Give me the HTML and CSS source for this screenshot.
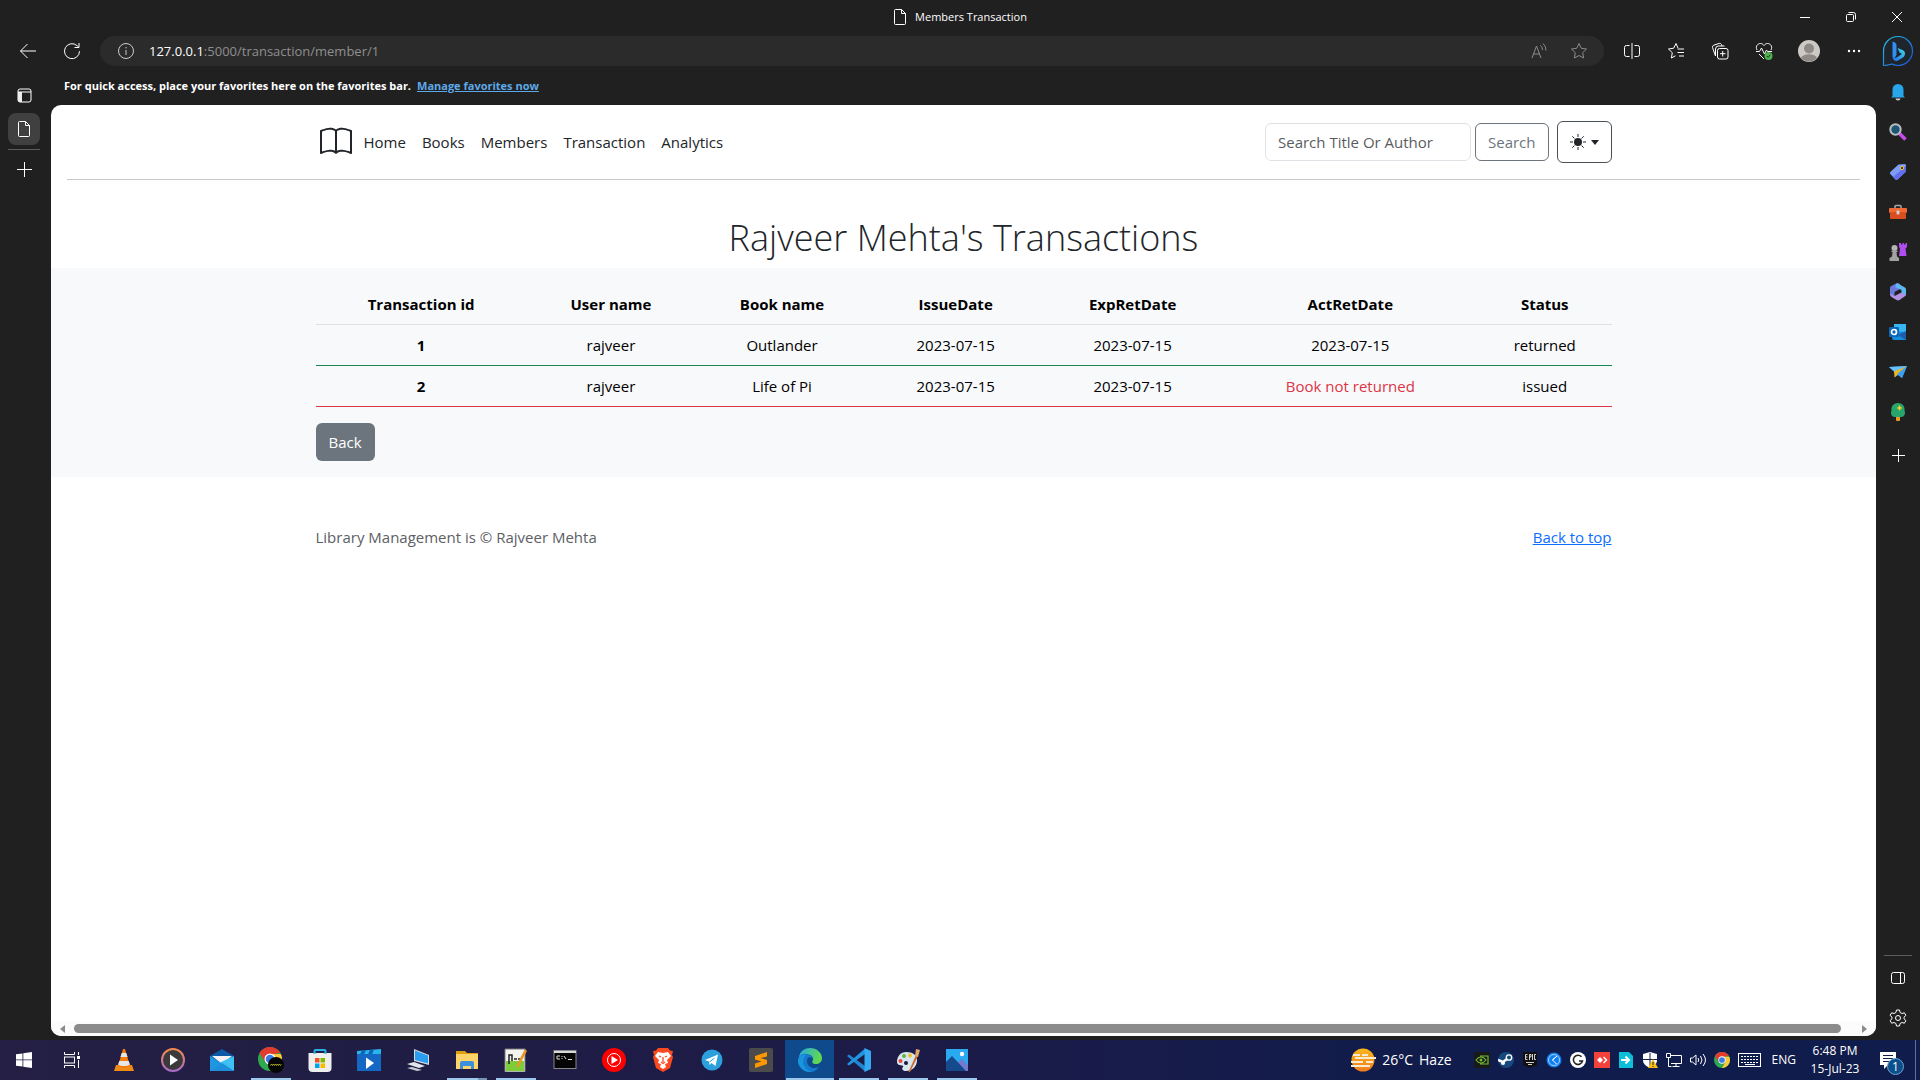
FILE: index.html
```html
<!DOCTYPE html>
<html lang="en">
<head>
<meta charset="utf-8">
<meta name="viewport" content="width=device-width, initial-scale=1">
<title>Members Transaction</title>
<link rel="stylesheet" href="styles.css">
</head>
<body>
<div class="desktop">
  <div class="browser">
    <div class="chrome">
      <div class="titlebar">
        <div class="tab-title">
          <svg class="line" width="14" height="18" viewBox="0 0 14 18"><path d="M2.500 1.500h6l4 4v10a1 1 0 0 1-1 1h-9a1 1 0 0 1-1-1v-13a1 1 0 0 1 1-1zM8.500 1.500v4h4"/></svg>
          <span>Members Transaction</span>
        </div>
        <div class="window-buttons">
          <button aria-label="Minimize"><svg class="line" width="12" height="12" viewBox="0 0 12 12"><path d="M1 6.500h10"/></svg></button>
          <button aria-label="Restore"><svg class="line" width="12" height="12" viewBox="0 0 12 12"><rect x="1.500" y="3.500" width="7" height="7" rx="1"/><path d="M3.500 1.500h5a2 2 0 0 1 2 2v5"/></svg></button>
          <button aria-label="Close"><svg class="line" width="12" height="12" viewBox="0 0 12 12"><path d="M1 1l10 10M11 1L1 11"/></svg></button>
        </div>
      </div>
      <div class="toolbar">
        <div class="nav-buttons">
          <button aria-label="Back"><svg class="line" width="18" height="18" viewBox="0 0 18 18"><path d="M17 9H1.500M8.500 2L1.500 9l7 7"/></svg></button>
          <button aria-label="Refresh"><svg class="line" width="18" height="18" viewBox="0 0 18 18"><path d="M16.500 9.200A7.500 7.500 0 1 1 14 3.600l1.500 1.400M16 1v4.500h-4.500"/></svg></button>
        </div>
        <div class="address">
          <svg class="line soft" width="18" height="18" viewBox="0 0 18 18"><circle cx="9" cy="9" r="7.500"/><path d="M9 8v5M9 5v1.400"/></svg>
          <div class="url" role="textbox" aria-label="Address"><b>127.0.0.1</b>:5000/transaction/member/1</div>
          <button aria-label="Read aloud"><svg class="line dim" width="18" height="18" viewBox="0 0 18 18"><path d="M2 16L6.500 4 11 16M3.500 12h6M10.500 3.500a6 6 0 0 1 2 4.500M13 1.500a9 9 0 0 1 3 7"/></svg></button>
          <button aria-label="Add to favorites"><svg class="line dim" width="18" height="18" viewBox="0 0 18 18"><path d="M9 1.500l2.300 4.800 5.200.7-3.800 3.700.9 5.300L9 13.500 4.400 16l.9-5.300L1.500 7l5.200-.7z"/></svg></button>
        </div>
        <div class="tool-buttons">
          <button aria-label="Split screen"><svg class="line" width="18" height="18" viewBox="0 0 18 18"><path d="M6.500 3.500h-3a2 2 0 0 0-2 2v7a2 2 0 0 0 2 2h3M11.500 3.500h3a2 2 0 0 1 2 2v7a2 2 0 0 1-2 2h-3M9 1v16"/></svg></button>
          <button aria-label="Favorites"><svg class="line" width="18" height="18" viewBox="0 0 18 18"><path d="M11 6L9 1.500 6.700 6.200 1.500 7l3.800 3.700-.9 5.300 4-2.200M10.500 7H17M10.500 10.500H17M12 14h5"/></svg></button>
          <button aria-label="Collections"><svg class="line" width="18" height="18" viewBox="0 0 18 18"><rect x="6.500" y="6.500" width="10.500" height="10.500" rx="2"/><path d="M11.700 9v5.500M9 11.700h5.500M4.500 14L1.500 5.500a2 2 0 0 1 1.300-2.300L8 1.500c1-.3 2 0 2.500 1l.5 1.500M4.500 14V7a3 3 0 0 1 3-3h6"/></svg></button>
          <button aria-label="Browser essentials"><svg width="18" height="18" viewBox="0 0 18 18"><path class="line" d="M2 8C0 4 3 1.500 5.500 1.500 7 1.500 8 2.200 9 3.500c1-1.300 2-2 3.500-2C15 1.500 18 4 16 8M1 9.500h3.500L6.500 6l3 6 2-4 1 1.500H17M4 12l5 5"/><circle cx="13.500" cy="14" r="4" fill="#4caf50"/><path d="M11.800 14l1.300 1.300 2.300-2.600" fill="none" stroke="#173d18"/></svg></button>
          <button class="wide" aria-label="Profile"><svg width="22" height="22" viewBox="0 0 22 22"><circle cx="11" cy="11" r="11" fill="#cdc9c4"/><circle cx="11" cy="8.500" r="5" fill="#8f8a86"/><path d="M3 18c2-5 14-5 16 0a11 11 0 0 1-16 0z" fill="#8f8a86"/></svg></button>
          <button class="wide" aria-label="Settings and more"><svg width="14" height="4" viewBox="0 0 14 4" fill="#fff"><circle cx="2" cy="2" r="1.200"/><circle cx="7" cy="2" r="1.200"/><circle cx="12" cy="2" r="1.200"/></svg></button>
          <button aria-label="Bing chat"><svg width="32" height="32" viewBox="0 0 32 32"><defs><linearGradient id="bing" x1="0" y1="0" x2="1" y2="1"><stop offset="0" stop-color="#25c4e8"/><stop offset="1" stop-color="#1c4fd6"/></linearGradient><linearGradient id="swoosh" x1="1" y1="0" x2="0" y2="1"><stop offset="0" stop-color="#3ee0e8"/><stop offset="1" stop-color="#2368e8"/></linearGradient></defs><path d="M1.500 30.500V16A14.500 14.500 0 1 1 16 30.500c-2 0-4-.5-6-1.500-2.500.8-5 1.500-8.500 1.500z" fill="#1e252c" stroke="url(#bing)" stroke-width="1.200"/><path d="M10.500 6.500c2 .3 4 1.500 4 4V20l-2 3c-1.500-.5-2-1.500-2-3z" fill="#2f8ff2"/><path d="M10.500 20c.5 3 3 3.500 5 2l4.500-3-2.500-1.500-2-4.500 5 2c3.500 1.700 3 5.500.5 7.500L16 25.500c-3 1.500-5.500-.5-5.500-3.500z" fill="url(#swoosh)"/></svg></button>
        </div>
      </div>
      <div class="favorites">
        <span>For quick access, place your favorites here on the favorites bar.</span>
        <a href="#favorites">Manage favorites now</a>
      </div>
    </div>

    <div class="workspace">
      <div class="tab-rail">
        <button class="rail-item" aria-label="Tab actions"><svg width="15" height="15" viewBox="0 0 15 15"><rect class="line" x="1" y="1" width="13" height="13" rx="2"/><path d="M1 4h4v10H3a2 2 0 0 1-2-2z" fill="#eee"/><path class="line" d="M1 4h13"/></svg></button>
        <button class="rail-item rail-active" aria-label="Members Transaction tab"><svg class="line" width="14" height="18" viewBox="0 0 14 18"><path d="M2.500 1.500h6l4 4v10a1 1 0 0 1-1 1h-9a1 1 0 0 1-1-1v-13a1 1 0 0 1 1-1zM8.500 1.500v4h4"/></svg></button>
        <div class="rail-line"></div>
        <button class="rail-item" aria-label="New tab"><svg class="line" width="15" height="15" viewBox="0 0 15 15"><path d="M7.500 0v15M0 7.500h15"/></svg></button>
      </div>

      <div class="viewport">
        <div class="page" id="top">
          <header class="site-header">
            <div class="container header-row">
              <a class="brand" href="#top" aria-label="Library"><svg width="40" height="32" viewBox="0 0 16 16" fill="#212529"><path d="M1 2.828c.885-.37 2.154-.769 3.388-.893 1.330-.134 2.458.063 3.112.752v9.746c-.935-.530-2.120-.603-3.213-.493-1.180.120-2.370.461-3.287.811V2.828zm7.500-.141c.654-.689 1.782-.886 3.112-.752 1.234.124 2.503.523 3.388.893v9.923c-.918-.350-2.107-.692-3.287-.810-1.094-.111-2.278-.039-3.213.492V2.687zM8 1.783C7.015.936 5.587.810 4.287.940c-1.514.153-3.042.672-3.994 1.105A.5.5 0 0 0 0 2.500v11a.5.5 0 0 0 .707.455c.882-.400 2.303-.881 3.680-1.020 1.409-.142 2.590.087 3.223.877a.5.5 0 0 0 .780 0c.633-.790 1.814-1.019 3.222-.877 1.378.139 2.800.620 3.681 1.020A.5.5 0 0 0 16 13.500v-11a.5.5 0 0 0-.293-.455c-.952-.433-2.480-.952-3.994-1.105C10.413.809 8.985.936 8 1.783z"/></svg></a>
              <nav class="site-nav">
                <a href="#home">Home</a><a href="#books">Books</a><a href="#members">Members</a><a href="#transaction">Transaction</a><a href="#analytics">Analytics</a>
              </nav>
              <form class="search" role="search">
                <input type="search" placeholder="Search Title Or Author" aria-label="Search Title Or Author">
                <button type="button" class="btn btn-outline">Search</button>
              </form>
              <button class="btn theme-toggle" aria-label="Theme">
                <svg width="16" height="16" viewBox="0 0 16 16" fill="#212529"><circle cx="8" cy="8" r="4"/><path d="M8 0v3M8 13v3M0 8h3M13 8h3M2.300 2.300l2.200 2.200M11.500 11.500l2.200 2.200M2.300 13.700l2.200-2.200M11.500 4.500l2.200-2.200" stroke="#212529"/></svg>
                <svg width="8" height="5" viewBox="0 0 8 5" fill="#212529"><path d="M0 0h8L4 5z"/></svg>
              </button>
            </div>
          </header>
          <hr class="divider">
          <main>
            <h1>Rajveer Mehta's Transactions</h1>
            <section class="records">
              <div class="container">
                <table class="transactions">
                  <colgroup><col class="c-id"><col class="c-user"><col class="c-date"><col class="c-date"><col class="c-exp"><col class="c-act"><col class="c-status"></colgroup>
                  <thead><tr><th scope="col">Transaction id</th><th scope="col">User name</th><th scope="col">Book name</th><th scope="col">IssueDate</th><th scope="col">ExpRetDate</th><th scope="col">ActRetDate</th><th scope="col">Status</th></tr></thead>
                  <tbody>
                    <tr class="row-returned"><th scope="row">1</th><td>rajveer</td><td>Outlander</td><td>2023-07-15</td><td>2023-07-15</td><td>2023-07-15</td><td>returned</td></tr>
                    <tr class="row-issued"><th scope="row">2</th><td>rajveer</td><td>Life of Pi</td><td>2023-07-15</td><td>2023-07-15</td><td class="danger">Book not returned</td><td>issued</td></tr>
                  </tbody>
                </table>
                <button class="btn btn-secondary">Back</button>
              </div>
            </section>
          </main>
          <footer class="container site-footer">
            <p>Library Management is © Rajveer Mehta</p>
            <a href="#top">Back to top</a>
          </footer>
        </div>
        <div class="scrollbar">
          <svg width="5" height="8" viewBox="0 0 5 8" fill="#8b8b8b"><path d="M5 0v8L0 4z"/></svg>
          <div class="thumb"></div>
          <svg width="5" height="8" viewBox="0 0 5 8" fill="#8b8b8b"><path d="M0 0v8l5-4z"/></svg>
        </div>
      </div>

      <div class="side-rail">
        <button class="side-item" aria-label="Notifications"><svg width="18" height="18" viewBox="0 0 18 18"><path d="M3.500 13V6.500a5.500 5.500 0 0 1 11 0V13l1.500 1.500H2z" fill="#27a7ea"/><path d="M6.500 15.500h5a2.500 2 0 0 1-5 0z" fill="#c8c8c8"/></svg></button>
        <button class="side-item" aria-label="Search"><svg width="18" height="18" viewBox="0 0 18 18"><path d="M10.500 10.500l6 6" stroke="#c94bea" stroke-width="3.500"/><circle cx="6.500" cy="6.500" r="5.200" fill="#1c5673" stroke="#b9bcbe" stroke-width="2"/></svg></button>
        <button class="side-item" aria-label="Shopping"><svg width="18" height="18" viewBox="0 0 18 18"><path d="M9.500 1.500L16 1l1 1-.5 7-8 7.500c-.7.600-1.500.600-2 0L1.300 11c-.5-.6-.5-1.300 0-2z" fill="#7f9cf8"/><path d="M17 3l-.5 6-8 7.500c-.7.600-1.500.600-2 0L4 14z" fill="#6070ee"/><circle cx="13" cy="5" r="1.700" fill="#34396a" stroke="#f5c72e"/></svg></button>
        <button class="side-item" aria-label="Tools"><svg width="18" height="18" viewBox="0 0 18 18"><path d="M6 5V3.500a1 1 0 0 1 1-1h4a1 1 0 0 1 1 1V5" fill="none" stroke="#a7a7a7" stroke-width="1.500"/><rect x="0" y="5" width="18" height="5" rx="1" fill="#ef6a35"/><path d="M1 9h16v6a1 1 0 0 1-1 1H2a1 1 0 0 1-1-1z" fill="#d94e1f"/><rect x="7.500" y="7.500" width="3" height="4" rx="1" fill="#d0d0d0"/></svg></button>
        <button class="side-item" aria-label="Games"><svg width="18" height="18" viewBox="0 0 18 18"><path d="M10 0h2v1.500h1.500V0h1.500v1.500h1.500V0H18v4l-1.500 1.500L17.500 13H10l1-7.500L10 4z" fill="#b04df0"/><circle cx="5.500" cy="5" r="3" fill="#b5b5b5"/><path d="M2.500 7.500h6V9H7.500L8 13.500l2 1.500v3H.5v-3L3 13.500 3.500 9h-1z" fill="#a2a2a2"/></svg></button>
        <button class="side-item" aria-label="Microsoft 365"><svg width="18" height="18" viewBox="0 0 18 18"><path d="M8 0l3 1v5L5.500 9v5L1 12V5c0-1 .5-1.500 1.300-2z" fill="#6b78dc"/><path d="M8 0l7.500 4.200c1 .6 1.500 1.200 1.500 2.300v6L12.500 10V7L6 4z" fill="#5db8f2"/><path d="M1 10.500L5.500 13l7-3.500L17 12c-.3.800-.8 1.200-1.500 1.600l-5 3.400c-1 .6-2 .6-3 0l-5-3C1.500 13.300 1 12 1 10.500z" fill="#b292e0"/></svg></button>
        <button class="side-item" aria-label="Outlook"><svg width="18" height="18" viewBox="0 0 18 18"><rect x="5" y="1" width="12" height="9" fill="#37b6f4"/><path d="M3 8l14 1v8H5a2 2 0 0 1-2-2z" fill="#158be0"/><path d="M17 8v9l-8-5z" fill="#1e5da8"/><rect x="0" y="4" width="10" height="10" rx="1" fill="#0a66b8"/><circle cx="5" cy="9" r="2.500" fill="none" stroke="#fff" stroke-width="1.700"/></svg></button>
        <button class="side-item" aria-label="Drop"><svg width="18" height="18" viewBox="0 0 18 18"><path d="M0 4l18-1-5 12-4-3-3 2V9z" fill="#389ff0"/><path d="M18 3L5.500 14.500 5 8z" fill="#f3b41d"/><path d="M18 3l-5 12-5-4z" fill="#3aa0f2"/><path d="M0 4l18-1L5 8.500z" fill="#63c2fa"/></svg></button>
        <button class="side-item" aria-label="Tree"><svg width="18" height="18" viewBox="0 0 18 18"><rect x="7" y="12" width="4" height="6" rx="1" fill="#e89b21"/><path d="M9 0c5 0 7 4 6.500 7.500C17 11 15 14 12.500 14h-7C3 14 1 11 2.500 7.500 2 4 4 0 9 0z" fill="#27a56b"/><path d="M10.500 2l1 2 2 1-2 1-1 2-1-2-2-1 2-1z" fill="#f6cf2d"/></svg></button>
        <button class="side-item side-add" aria-label="Add"><svg class="line" width="13" height="13" viewBox="0 0 13 13"><path d="M6.500 0v13M0 6.500h13"/></svg></button>
        <div class="side-bottom">
          <button class="side-item" aria-label="Hide sidebar"><svg class="line" width="16" height="16" viewBox="0 0 16 16"><rect x="1.500" y="2.500" width="13" height="11" rx="2"/><path d="M10.500 2.500v11"/></svg></button>
          <button class="side-item" aria-label="Sidebar settings"><svg class="line" width="18" height="18" viewBox="0 0 18 18"><path d="M7.500 1h3l.6 2.500 1.800 1 2.500-.7 1.500 2.600-1.900 1.800v1.600l1.900 1.800-1.500 2.600-2.500-.7-1.800 1-.6 2.500h-3l-.6-2.500-1.800-1-2.500.7L1.100 11.600 3 9.800V8.200L1.100 6.400l1.500-2.600 2.500.7 1.800-1z"/><circle cx="9" cy="9" r="2.500"/></svg></button>
        </div>
      </div>
    </div>
  </div>

  <div class="taskbar">
    <div class="system-apps">
      <button aria-label="Start"><svg width="16" height="16" viewBox="0 0 16 16" fill="#fff"><path d="M0 2.300L6.500 1.400v6.100H0zM7.300 1.300L16 0v7.500H7.300zM0 8.300h6.500v6.300L0 13.700zM7.300 8.300H16V16l-8.700-1.300z"/></svg></button>
      <button aria-label="Task view"><svg class="line" width="16" height="16" viewBox="0 0 16 16"><path d="M.5 0v2.500h10V0M.5 16v-2.500h10V16M14.500 0v3M14.500 8v8"/><rect x=".5" y="5" width="10" height="6"/><rect x="13" y="4" width="3" height="3" fill="#fff" stroke="none"/></svg></button>
    </div>
    <div class="apps">
      <button aria-label="VLC"><svg width="24" height="24" viewBox="0 0 24 24"><path d="M4 17h16l2 6H2z" fill="#f08a14"/><path d="M11 1h2l5 17c-3 2.500-9 2.500-12 0z" fill="#f27c0e"/><path d="M9.800 5h4.400l1.400 4H8.400zM7.300 13h9.400l1.200 3.500c-3 2-9 2-11.800 0z" fill="#e6e6e6"/></svg></button>
      <button aria-label="Media player"><svg width="24" height="24" viewBox="0 0 24 24"><defs><linearGradient id="ring" x1="0" y1="0" x2="0" y2="1"><stop offset="0" stop-color="#f58a4b"/><stop offset="1" stop-color="#a86bc8"/></linearGradient></defs><circle cx="12" cy="12" r="11" fill="#3a3a3c" stroke="url(#ring)" stroke-width="2"/><path d="M9 6.500l8 5.500-8 5.500z" fill="#fff"/></svg></button>
      <button aria-label="Mail"><svg width="24" height="24" viewBox="0 0 24 24"><path d="M0 8l12-7 12 7v8H0z" fill="#0a5aa8"/><path d="M2 8h20l-10 8z" fill="#f2f2f2"/><path d="M0 8l24 15H0z" fill="#1f97e0"/><path d="M24 8v15L10 14.500z" fill="#3ec0f4"/><path d="M0 23h24L12 15z" fill="#1e8fdc"/></svg></button>
      <button class="running" aria-label="Chrome"><svg width="26" height="26" viewBox="0 0 26 26"><circle cx="12" cy="12" r="12" fill="#2da94f"/><path d="M1.600 6A12 12 0 0 1 22.400 6L12 7.500 7 15z" fill="#e33b2e"/><path d="M12 7h10.900A12 12 0 0 1 12 24l5-9z" fill="#fcc934"/><circle cx="12" cy="12" r="5.500" fill="#fff"/><circle cx="12" cy="12" r="4.300" fill="#3a7be8"/><circle cx="18" cy="18" r="8" fill="#050505"/><path d="M12.500 18.500l1-1.500 1 1.500 1-1.500 1 1.500 1-1.500 1 1.500 1-1.500 1 1.500 1-1.500 1 1.500 1-1" fill="none" stroke="#b5b62b"/></svg></button>
      <button aria-label="Store"><svg width="24" height="24" viewBox="0 0 24 24"><path d="M.5 5h23v15a4 4 0 0 1-4 4h-15a4 4 0 0 1-4-4z" fill="#eee"/><path d="M6.500 6V3a1 1 0 0 1 1-1h9a1 1 0 0 1 1 1v3" fill="none" stroke="#26b2e8" stroke-width="2"/><path d="M7 10h4.500v4.500H7z" fill="#f25022"/><path d="M12.500 10H17v4.500h-4.500z" fill="#7fba00"/><path d="M7 15.500h4.500V20H7z" fill="#00a4ef"/><path d="M12.500 15.500H17V20h-4.500z" fill="#ffb900"/></svg></button>
      <button aria-label="Movies"><svg width="24" height="24" viewBox="0 0 24 24"><path d="M0 3l24-2v5H0z" fill="#28b5ee"/><path d="M5 2.500l4-.3-2 4H3zM13 1.800l4-.3-2 4.700h-4z" fill="#0c64b4"/><path d="M0 6h24v17H0z" fill="#1468c4"/><path d="M9 9.500l8 5.500-8 6z" fill="#fff"/></svg></button>
      <button aria-label="Remote PC"><svg width="24" height="24" viewBox="0 0 24 24"><path d="M8 1l15 6v10L8 13z" fill="#d6dce2"/><path d="M9 2.500l13 5v8L9 12z" fill="#2b9df0"/><path d="M1 16l7-2 11 4-6 2z" fill="#e3e6ea"/><path d="M1 20l5-1 10 3-5 1z" fill="#c5ccd3"/></svg></button>
      <button class="running stacked" aria-label="File Explorer"><svg width="24" height="24" viewBox="0 0 24 24"><path d="M1 3h9l2 2h11v4H1z" fill="#dfa010"/><path d="M1 6h22v15H1z" fill="#fcd469"/><path d="M5 21v-6a2 2 0 0 1 2-2h10a2 2 0 0 1 2 2v6h-3v-3H8v3z" fill="#3a90dc"/></svg></button>
      <button class="running" aria-label="Notepad++"><svg width="24" height="24" viewBox="0 0 24 24"><path d="M1 1h20v23H1z" fill="#f4f4ee"/><path d="M2 13h18v10H2z" fill="#7dcc3a"/><path d="M1 1h20v23H1z" fill="none" stroke="#777"/><path d="M5 16V7h3v6M10 11h3M14 11h3" fill="none" stroke="#222" stroke-width="1.500"/><path d="M21 1l2 2-8 15-3 2 1-4z" fill="#e89a28"/></svg></button>
      <button aria-label="Command Prompt"><svg width="24" height="24" viewBox="0 0 24 24"><rect x="1" y="2.500" width="22" height="18" fill="#050505" stroke="#888"/><path d="M1 3h22v2H1z" fill="#d8d8d8"/><path d="M7 8H4v3h3M9 8v1M9 10v1M11 8l2 3M15 11.500h4" fill="none" stroke="#ddd"/></svg></button>
      <button aria-label="YouTube Music"><svg width="24" height="24" viewBox="0 0 24 24"><circle cx="12" cy="12" r="12" fill="#f00"/><circle cx="12" cy="12" r="6.500" fill="none" stroke="#fff"/><path d="M9.500 8l6.500 4-6.500 4z" fill="#fff"/></svg></button>
      <button aria-label="Brave"><svg width="24" height="24" viewBox="0 0 24 24"><path d="M7 0h10l2 2.500 3 .5-1 4 1 2-3 11-7 4-7-4L2 9l1-2-1-4 3-.5z" fill="#fb4a1f"/><path d="M7 4l5 1 5-1 3 4-4 4 1 3-3 1 1 3-3 2-3-2 1-3-3-1 1-3-4-4z" fill="#fff"/><path d="M8 8l2 1M16 8l-2 1M12 9v5M10 14l2 1.500 2-1.500" fill="none" stroke="#fb4a1f" stroke-width="1.300"/></svg></button>
      <button aria-label="Telegram"><svg width="22" height="22" viewBox="0 0 22 22"><circle cx="11" cy="11" r="10.500" fill="#2ba0dc"/><path d="M4 11l13-5.500-2.500 11.500-4-3-2 2-.5-3.500z" fill="#fff"/><path d="M8.500 13l5-4" stroke="#2ba0dc"/></svg></button>
      <button aria-label="Sublime Text"><svg width="24" height="24" viewBox="0 0 24 24"><rect width="24" height="24" rx="2" fill="#4b4b4b"/><path d="M6 8l12-4v4.500L11.500 10l6.500 2v4L6 20v-4.500l6.500-2L6 11.500z" fill="#ff9800"/></svg></button>
      <button class="running current" aria-label="Edge"><svg width="24" height="24" viewBox="0 0 24 24"><defs><linearGradient id="edge" x1="0" y1="0" x2="1" y2=".3"><stop offset="0" stop-color="#24a8e8"/><stop offset="1" stop-color="#61d94e"/></linearGradient></defs><path d="M1 9C2 3 7 0 12 0c7 0 12 5 12 10 0 4-3 6-6 6-4 0-4-2-3.500-3 2-4-2-7-6-6C4 8 2 12 1 15z" fill="url(#edge)"/><path d="M0 13c0-5 4-8 9-7 3 .5 5 2 5 4-3-2-5 0-5 3 0 5 5 9 12 6-2 3-5 5-9 5C5 24 0 19 0 13z" fill="#1679d0"/><path d="M8 7c-3 3-4 8-1 12 2 3 4 4 7 4.800C7 25 0 19 0 13c0-4 4-7 8-6z" fill="#1994dd"/></svg></button>
      <button class="running" aria-label="VS Code"><svg width="24" height="24" viewBox="0 0 24 24"><path d="M0 8l2-1.500L18 18v5.500z" fill="#1f86cf"/><path d="M0 16l2 1.500L18 6V.5z" fill="#2094de"/><path d="M17.500 0L24 3v18l-6.500 3z" fill="#35aaf2"/></svg></button>
      <button class="running" aria-label="Paint"><svg width="24" height="24" viewBox="0 0 24 24"><path d="M10 4c7 0 11 3 11 8 0 6-4 11-11 11-3 0-5-2-3-4 2-3-6 0-6-5C1 8 5 4 10 4z" fill="#d9e6ee"/><circle cx="4.500" cy="13" r="2" fill="#e34a3b"/><circle cx="8" cy="8" r="2" fill="#62b445"/><circle cx="14" cy="7.500" r="2" fill="#f0bd29"/><circle cx="10" cy="15" r="2" fill="#19194a"/><path d="M12.500 24L20 7l2 1-8 16z" fill="#c96d28"/><path d="M19 8l1-7 4 1-2 7z" fill="#dfa769"/></svg></button>
      <button class="running" aria-label="Photos"><svg width="24" height="24" viewBox="0 0 24 24"><path d="M1 1h22v22H1z" fill="#2aaaf0"/><path d="M12 15l5-4 6 6v6H12z" fill="#717bd0"/><path d="M1 14l6-6 14 15H1z" fill="#154a8c"/><circle cx="17" cy="6" r="2.200" fill="#fff"/></svg></button>
    </div>
    <div class="weather">
      <svg width="26" height="24" viewBox="0 0 26 24"><defs><linearGradient id="sun" x1="0" y1="0" x2="0" y2="1"><stop offset="0" stop-color="#fbb81c"/><stop offset="1" stop-color="#f17a1c"/></linearGradient></defs><circle cx="13" cy="12" r="11.500" fill="url(#sun)"/><path d="M3 7h7M12 7h6M5 10h21M1 14h12M16 14h7M1 18h19" stroke="#f6ead2" stroke-width="1.800"/></svg>
      <span>26°C</span><span>Haze</span>
    </div>
    <div class="tray">
      <svg width="16" height="16" viewBox="0 0 16 16"><path d="M0 0h16v16H0z" fill="#171a17"/><path d="M2 8c3-4 7-4 10 0-3 4-7 4-10 0zM6 4h8v8H6" fill="none" stroke="#76b93a" stroke-width="1.200"/><circle cx="7" cy="8" r="1.500" fill="#76b93a"/></svg>
      <svg width="16" height="16" viewBox="0 0 16 16"><circle cx="8" cy="8" r="8" fill="#174a7c"/><path d="M0 8l5 2 4-3" fill="none" stroke="#fff" stroke-width="2.500"/><circle cx="11" cy="5.500" r="2.700" fill="#174a7c" stroke="#fff" stroke-width="1.300"/><circle cx="5" cy="11" r="2" fill="#fff"/></svg>
      <svg width="16" height="16" viewBox="0 0 16 16"><path d="M1 0h14v13l-7 3-7-3z" fill="#111"/><path d="M5.500 2.500h-2v5h2M3.500 5h2M7.500 8V2.500H9V5H7.500M10.500 2v6M14 2.500h-1.500v5H14M4 10.500h8M6 12.500h4" fill="none" stroke="#fff" stroke-width=".8"/></svg>
      <svg width="16" height="16" viewBox="0 0 16 16"><circle cx="8" cy="8" r="7.500" fill="#0f7ef0"/><circle cx="8" cy="8" r="5.500" fill="none" stroke="#a4d2ff"/><path d="M11 4L6.500 8l4 4M6.500 8L9 5.500" fill="none" stroke="#fff"/></svg>
      <svg width="16" height="16" viewBox="0 0 16 16"><circle cx="8" cy="8" r="8" fill="#fff"/><path d="M11.500 4.800A4.600 4.600 0 1 0 12.500 9H9" fill="none" stroke="#222" stroke-width="1.500"/></svg>
      <svg width="16" height="16" viewBox="0 0 16 16"><path d="M0 0h16v16H0z" fill="#f4423a"/><path d="M6 5l3 3-3 3-3-3z" fill="#fff"/><path d="M9.500 5l3 3-3 3" fill="none" stroke="#fff" stroke-width="1.500"/></svg>
      <svg width="16" height="16" viewBox="0 0 16 16"><path d="M1 0h10l4 4v12H1z" fill="#0cbfd8"/><path d="M3 8h7M7.500 4.500L11 8l-3.500 3.500" fill="none" stroke="#fff" stroke-width="2"/></svg>
      <svg width="16" height="16" viewBox="0 0 16 16"><path d="M8 0l7 2v6c0 4-3 6-7 8-4-2-7-4-7-8V2z" fill="#fff"/><path d="M8 1v14M1 7.500h14" stroke="#111d4a"/><path d="M11 7l5 9H6z" fill="#fbbd16"/><path d="M11 10v3M11 14v1" stroke="#222"/></svg>
      <svg class="line" width="16" height="16" viewBox="0 0 16 16"><path d="M5 3.500h10.500v8H5M10 12v2.500M6.500 14.500h7M.5 1.500h4v4h-4zM2.500 5.500v9h3"/></svg>
      <svg class="line" width="16" height="16" viewBox="0 0 16 16"><path d="M.5 6v4h2L6 13V3L2.500 6zM8 6q1.500 2 0 4M10.500 4q3 4 0 8M13 2q5 6 0 12"/></svg>
      <svg width="16" height="16" viewBox="0 0 24 24"><circle cx="12" cy="12" r="12" fill="#2da94f"/><path d="M1.600 6A12 12 0 0 1 22.400 6L12 7.500 7 15z" fill="#e33b2e"/><path d="M12 7h10.900A12 12 0 0 1 12 24l5-9z" fill="#fcc934"/><circle cx="12" cy="12" r="5.500" fill="#fff"/><circle cx="12" cy="12" r="4.300" fill="#3a7be8"/></svg>
    </div>
    <svg class="line keyboard" width="24" height="16" viewBox="0 0 24 16"><rect x=".5" y="1.500" width="22" height="13"/><path d="M3 4.500h17M3 7.500h17M3 10.500h17" stroke-dasharray="2 1"/><path d="M7 12.500h10"/></svg>
    <span class="lang">ENG</span>
    <div class="clock"><span>6:48 PM</span><span>15-Jul-23</span></div>
    <button class="notify" aria-label="1 notification"><svg width="18" height="18" viewBox="0 0 18 18"><path d="M0 1h16v13H8l-4 4v-4H0z" fill="#fff"/><path d="M3 4.500h10M3 7.500h10M3 10.500h6" stroke="#111d4a"/></svg><span class="badge">1</span></button>
  </div>
</div>
</body>
</html>
```
FILE: styles.css
```css
* { box-sizing: border-box; }
body { margin: 0; background: #202020; font-family: "Open Sans", "Noto Sans", sans-serif; font-size: 15px; line-height: 24px; color: #212529; }
button { margin: 0; padding: 0; border: 0; background: none; color: inherit; font: inherit; display: flex; align-items: center; justify-content: center; }
svg { display: block; flex: none; }
.line { fill: none; stroke: #fff; stroke-width: 1; }
.soft { stroke: #ccc; }
.dim { stroke: #8c8c8c; }
.desktop { min-height: 100vh; display: flex; flex-direction: column; }
.browser { flex: 1; display: flex; flex-direction: column; background: #202020; padding-bottom: 4px; }

/* window chrome */
.titlebar { display: grid; grid-template-columns: 1fr auto 1fr; align-items: center; height: 34px; }
.tab-title { grid-column: 2; display: flex; align-items: center; gap: 8px; color: #fff; font-size: 11px; }
.window-buttons { display: flex; justify-content: flex-end; }
.window-buttons button { width: 46px; height: 32px; }
.toolbar { display: flex; align-items: center; height: 34px; }
.nav-buttons { display: flex; width: 100px; padding-left: 6px; }
.nav-buttons button { width: 44px; height: 30px; }
.address { flex: 1; display: flex; align-items: center; height: 30px; padding: 0 13px 0 17px; background: #2b2b2b; border-radius: 15px; }
.address button { width: 40px; padding-left: 16px; }
.url { flex: 1; padding-left: 14px; font-size: 13px; color: #8f8f8f; }
.url b { font-weight: 400; color: #fff; }
.tool-buttons { display: flex; align-items: center; padding-left: 6px; }
.tool-buttons button { width: 44px; height: 34px; }
.tool-buttons .wide { width: 45px; }
.favorites { display: flex; align-items: center; gap: 6px; height: 37px; padding: 0 0 2px 64px; color: #fff; font-size: 11px; font-weight: 700; }
.favorites a { color: #5ea9e8; }

/* rails beside the page */
.workspace { flex: 1; display: grid; grid-template-columns: 51px minmax(0, 1fr) 44px; }
.tab-rail { display: flex; flex-direction: column; align-items: center; padding-right: 3px; margin-top: -26px; }
.rail-item { width: 32px; height: 32px; }
.rail-item:first-child { height: 34px; padding-bottom: 2px; }
.rail-active { background: #404040; border-radius: 8px; }
.rail-line { width: 32px; height: 1px; margin: 4px 0 3px; background: #5c5c5c; }
.side-rail { display: flex; flex-direction: column; align-items: center; margin-top: -33px; }
.side-item { width: 40px; height: 40px; }
.side-add { height: 46px; }
.side-bottom { margin-top: auto; display: flex; flex-direction: column; align-items: center; gap: 4px; }
.side-bottom .side-item { height: 36px; }
.side-bottom::before { content: ""; width: 28px; height: 1px; background: #5c5c5c; }

/* library page */
.viewport { display: flex; flex-direction: column; background: #fff; border-radius: 10px; overflow: hidden; }
.page { flex: 1; }
.container { width: 100%; max-width: 1320px; margin: 0 auto; padding: 0 12px; }
.site-header { padding: 16px 0; }
.header-row { display: flex; align-items: center; }
.brand { display: flex; }
.site-nav { display: flex; flex: 1; }
.site-nav a { padding: 8px; color: #212529; text-decoration: none; }
.search { display: flex; gap: 4px; margin-right: 8px; }
.search input { width: 206px; height: 38px; padding: 6px 12px; border: 1px solid #dee2e6; border-radius: 6px; background: #fff; font: inherit; color: #212529; }
.search input::placeholder { color: #595c5f; opacity: 1; }
.btn { height: 38px; padding: 6px 12px; border: 1px solid transparent; border-radius: 6px; }
.btn-outline { border-color: #6c757d; color: #6c757d; }
.theme-toggle { width: 55px; height: 42px; gap: 5px; border-color: #495057; }
.divider { height: 1px; margin: 0 16px; border: 0; background: #c8c9ca; }
h1 { margin: 0; padding: 34px 12px 6px; font-size: 36px; line-height: 48px; font-weight: 300; text-align: center; }
.records { padding: 16px 0; background: #f8f9fb; }
.transactions { width: 100%; margin-bottom: 16px; border-collapse: separate; border-spacing: 0; table-layout: fixed; color: #000; text-align: center; }
.transactions th, .transactions td { padding: 8px; height: 41px; border-bottom: 1px solid #dee2e6; }
.transactions th { font-weight: 700; }
.transactions .row-returned > * { border-color: #198754; }
.transactions .row-issued > * { border-color: #dc3545; }
.transactions .danger { color: #dc3545; }
.c-id { width: 16.3%; }
.c-user { width: 13%; }
.c-date { width: 13.4%; }
.c-exp { width: 13.9%; }
.c-act { width: 19.7%; }
.c-status { width: 10.3%; }
.btn-secondary { background: #6c757d; color: #fff; }
.site-footer { display: flex; justify-content: space-between; padding-top: 48px; color: #5c6065; }
.site-footer p { margin: 0; }
.site-footer a { color: #0d6efd; }
.scrollbar { display: flex; align-items: center; gap: 9px; height: 15px; padding: 0 9px; background: #fcfcfc; }
.thumb { flex: 1; height: 9px; margin-right: 12px; border-radius: 5px; background: #8b8b8b; }

/* taskbar */
.taskbar { display: flex; align-items: center; height: 40px; padding-right: 4px; color: #fff; font-size: 14px; line-height: 18px; background: linear-gradient(90deg, #241f43, #1b1b48 50%, #101c4b 75%, #101c4b); }
.system-apps, .apps { display: flex; height: 40px; }
.system-apps button { width: 48px; }
.apps { flex: 1; padding-left: 3px; }
.apps button { width: 49px; border-top: 2px solid transparent; border-bottom: 2px solid transparent; }
.apps .running { border-bottom: 0; background: linear-gradient(#9dc8ee, #9dc8ee) bottom / 40px 2px no-repeat; padding-bottom: 2px; }
.apps .stacked { background-image: linear-gradient(90deg, #9dc8ee 31px, #7893b4 31px); }
.apps .current { background: linear-gradient(#9dc8ee, #9dc8ee) bottom / 48px 2px no-repeat, #0f4a8c; background-clip: border-box; }
.weather { display: flex; align-items: center; gap: 6px; margin-right: 22px; }
.tray { display: flex; gap: 8px; margin-right: 8px; }
.lang { font-size: 12px; margin-left: 10px; }
.clock { width: 78px; display: flex; flex-direction: column; align-items: center; font-size: 12px; }
.notify { position: relative; width: 42px; height: 40px; border-right: 1px solid #66709a; padding-right: 12px; }
.badge { position: absolute; left: 13px; top: 18px; width: 17px; height: 17px; border: 1px solid #6fa5cf; border-radius: 50%; background: #0b4f8c; font-size: 12px; line-height: 15px; text-align: center; }
```
